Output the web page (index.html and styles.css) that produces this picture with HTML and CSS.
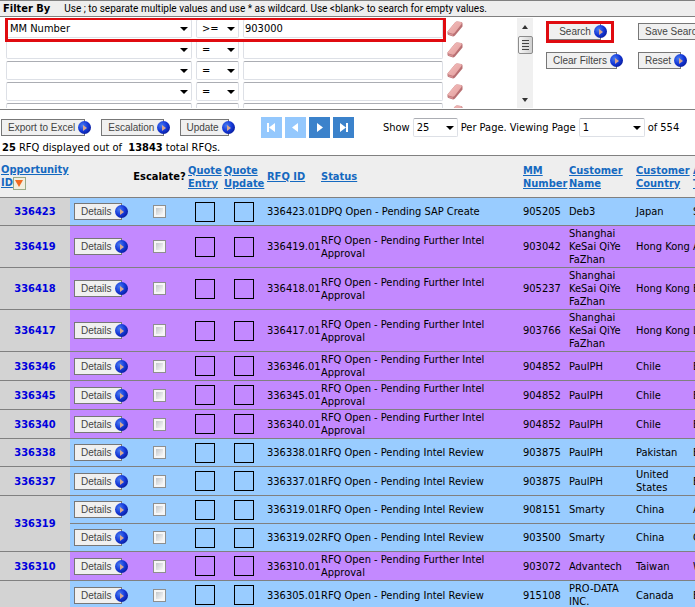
FILE: index.html
```html
<!DOCTYPE html>
<html lang="en">
<head>
<meta charset="utf-8">
<title>RFQ List</title>
<link rel="stylesheet" href="styles.css">
</head>
<body>
<svg class="defs" aria-hidden="true">
  <defs>
    <linearGradient id="pink" x1="0" y1="0" x2="1" y2="1">
      <stop offset="0" stop-color="#f3bfbd"/><stop offset="1" stop-color="#e39d9c"/>
    </linearGradient>
    <symbol id="eraser" viewBox="0 0 16 16">
      <path d="M0.500 10.500 L8 1.500 Q9 0.500 10 0.500 L14 1 Q15.500 1 15.500 2.500 L15.500 5.500 L8 14.500 Q7 15.500 6 15.500 L1.500 14 Q0.500 13.500 0.500 12.500 Z" fill="#b97073"/>
      <path d="M0.500 10.500 L8 1.500 Q9 0.500 10 0.500 L14 1 Q15.500 1.500 14.500 3 L7.500 12 Q6.500 13 5.500 12.700 L1.500 11.500 Q0.500 11.200 0.500 10.500 Z" fill="url(#pink)"/>
      <path d="M1 12 L6 13.500 L6 15 L2 13.800 Z" fill="#d69092"/>
    </symbol>
  </defs>
</svg>

<header class="filter-head">
  <h1>Filter By</h1>
  <p>Use ; to separate multiple values and use * as wildcard. Use &lt;blank&gt; to search for empty values.</p>
</header>

<form class="filters">
  <div class="filter-list">
    <div class="filter-row marked">
      <span class="select field"><select aria-label="Field 1"><option>MM Number</option></select></span>
      <span class="select op"><select aria-label="Operator 1"><option>&gt;=</option></select></span>
      <input class="value" type="text" aria-label="Value 1" value="903000">
      <button class="erase" type="button" aria-label="Clear row 1"><svg><use href="#eraser"/></svg></button>
    </div>
    <div class="filter-row">
      <span class="select field"><select aria-label="Field 2"><option></option></select></span>
      <span class="select op"><select aria-label="Operator 2"><option>=</option></select></span>
      <input class="value" type="text" aria-label="Value 2">
      <button class="erase" type="button" aria-label="Clear row 2"><svg><use href="#eraser"/></svg></button>
    </div>
    <div class="filter-row">
      <span class="select field"><select aria-label="Field 3"><option></option></select></span>
      <span class="select op"><select aria-label="Operator 3"><option>=</option></select></span>
      <input class="value" type="text" aria-label="Value 3">
      <button class="erase" type="button" aria-label="Clear row 3"><svg><use href="#eraser"/></svg></button>
    </div>
    <div class="filter-row">
      <span class="select field"><select aria-label="Field 4"><option></option></select></span>
      <span class="select op"><select aria-label="Operator 4"><option>=</option></select></span>
      <input class="value" type="text" aria-label="Value 4">
      <button class="erase" type="button" aria-label="Clear row 4"><svg><use href="#eraser"/></svg></button>
    </div>
    <div class="filter-row">
      <span class="select field"><select aria-label="Field 5"><option></option></select></span>
      <span class="select op"><select aria-label="Operator 5"><option></option></select></span>
      <input class="value" type="text" aria-label="Value 5">
      <button class="erase" type="button" aria-label="Clear row 5"><svg><use href="#eraser"/></svg></button>
    </div>
  </div>
  <div class="scrollbar" aria-hidden="true">
    <i class="up"></i><i class="thumb"></i><i class="down"></i>
  </div>
  <div class="actions">
    <span class="marked-button"><button class="btn search" type="button">Search</button></span>
    <button class="btn" type="button">Save Search</button>
    <button class="btn" type="button">Clear Filters</button>
    <button class="btn" type="button">Reset</button>
  </div>
</form>

<section class="toolbar">
  <div class="tools">
    <div class="commands">
      <button class="btn" type="button">Export to Excel</button>
      <button class="btn" type="button">Escalation</button>
      <button class="btn short" type="button">Update</button>
    </div>
    <nav class="pager" aria-label="Pages">
      <button type="button" disabled aria-label="First"><svg viewBox="0 0 21 21"><path d="M6 6h2v9H6zM14 6v9L8 10.500z"/></svg></button>
      <button type="button" disabled aria-label="Previous"><svg viewBox="0 0 21 21"><path d="M13 6v9L7 10.500z"/></svg></button>
      <button type="button" aria-label="Next"><svg viewBox="0 0 21 21"><path d="M8 6v9L14 10.500z"/></svg></button>
      <button type="button" aria-label="Last"><svg viewBox="0 0 21 21"><path d="M13 6h2v9H13zM7 6v9L13 10.500z"/></svg></button>
    </nav>
    <div class="paging">
      <label for="size">Show</label>
      <span class="select size"><select id="size"><option>25</option></select></span>
      <label for="page">Per Page. Viewing Page</label>
      <span class="select page"><select id="page"><option>1</option></select></span>
      <span>of 554</span>
    </div>
  </div>
  <p class="count"><b>25</b> RFQ displayed out of &nbsp;<b>13843</b> total RFQs.</p>
</section>

<main class="results">
<table>
  <colgroup>
    <col class="c-opp"><col class="c-det"><col class="c-esc"><col class="c-entry"><col class="c-upd"><col class="c-rfq"><col class="c-status"><col class="c-mm"><col class="c-name"><col class="c-country"><col>
  </colgroup>
  <thead>
    <tr>
      <th><a href="#">Opportunity<br>ID</a><span class="sort"></span></th>
      <th></th>
      <th class="mid">Escalate?</th>
      <th><a href="#">Quote<br>Entry</a></th>
      <th><a href="#">Quote<br>Update</a></th>
      <th class="rfq"><a href="#">RFQ ID</a></th>
      <th><a href="#">Status</a></th>
      <th><a href="#">MM<br>Number</a></th>
      <th><a href="#">Customer<br>Name</a></th>
      <th><a href="#">Customer<br>Country</a></th>
      <th><a href="#">A<br>T</a></th>
    </tr>
  </thead>
  <tbody>
    <tr class="blue"><th scope="row"><a href="#">336423</a></th><td class="det"><button class="btn" type="button">Details</button></td><td class="mid"><input type="checkbox" aria-label="Escalate 336423.01"></td><td class="mid"><i class="box"></i></td><td class="mid"><i class="box"></i></td><td class="rfq">336423.01</td><td>DPQ Open - Pending SAP Create</td><td>905205</td><td>Deb3</td><td>Japan</td><td>S</td></tr>
    <tr><th scope="row"><a href="#">336419</a></th><td class="det"><button class="btn" type="button">Details</button></td><td class="mid"><input type="checkbox" aria-label="Escalate 336419.01"></td><td class="mid"><i class="box"></i></td><td class="mid"><i class="box"></i></td><td class="rfq">336419.01</td><td>RFQ Open - Pending Further Intel Approval</td><td>903042</td><td>Shanghai KeSai QiYe FaZhan</td><td>Hong Kong</td><td>A</td></tr>
    <tr><th scope="row"><a href="#">336418</a></th><td class="det"><button class="btn" type="button">Details</button></td><td class="mid"><input type="checkbox" aria-label="Escalate 336418.01"></td><td class="mid"><i class="box"></i></td><td class="mid"><i class="box"></i></td><td class="rfq">336418.01</td><td>RFQ Open - Pending Further Intel Approval</td><td>905237</td><td>Shanghai KeSai QiYe FaZhan</td><td>Hong Kong</td><td>E</td></tr>
    <tr><th scope="row"><a href="#">336417</a></th><td class="det"><button class="btn" type="button">Details</button></td><td class="mid"><input type="checkbox" aria-label="Escalate 336417.01"></td><td class="mid"><i class="box"></i></td><td class="mid"><i class="box"></i></td><td class="rfq">336417.01</td><td>RFQ Open - Pending Further Intel Approval</td><td>903766</td><td>Shanghai KeSai QiYe FaZhan</td><td>Hong Kong</td><td>L</td></tr>
    <tr><th scope="row"><a href="#">336346</a></th><td class="det"><button class="btn" type="button">Details</button></td><td class="mid"><input type="checkbox" aria-label="Escalate 336346.01"></td><td class="mid"><i class="box"></i></td><td class="mid"><i class="box"></i></td><td class="rfq">336346.01</td><td>RFQ Open - Pending Further Intel Approval</td><td>904852</td><td>PaulPH</td><td>Chile</td><td>E</td></tr>
    <tr><th scope="row"><a href="#">336345</a></th><td class="det"><button class="btn" type="button">Details</button></td><td class="mid"><input type="checkbox" aria-label="Escalate 336345.01"></td><td class="mid"><i class="box"></i></td><td class="mid"><i class="box"></i></td><td class="rfq">336345.01</td><td>RFQ Open - Pending Further Intel Approval</td><td>904852</td><td>PaulPH</td><td>Chile</td><td>E</td></tr>
    <tr><th scope="row"><a href="#">336340</a></th><td class="det"><button class="btn" type="button">Details</button></td><td class="mid"><input type="checkbox" aria-label="Escalate 336340.01"></td><td class="mid"><i class="box"></i></td><td class="mid"><i class="box"></i></td><td class="rfq">336340.01</td><td>RFQ Open - Pending Further Intel Approval</td><td>904852</td><td>PaulPH</td><td>Chile</td><td>E</td></tr>
    <tr class="blue"><th scope="row"><a href="#">336338</a></th><td class="det"><button class="btn" type="button">Details</button></td><td class="mid"><input type="checkbox" aria-label="Escalate 336338.01"></td><td class="mid"><i class="box"></i></td><td class="mid"><i class="box"></i></td><td class="rfq">336338.01</td><td>RFQ Open - Pending Intel Review</td><td>903875</td><td>PaulPH</td><td>Pakistan</td><td>E</td></tr>
    <tr class="blue"><th scope="row"><a href="#">336337</a></th><td class="det"><button class="btn" type="button">Details</button></td><td class="mid"><input type="checkbox" aria-label="Escalate 336337.01"></td><td class="mid"><i class="box"></i></td><td class="mid"><i class="box"></i></td><td class="rfq">336337.01</td><td>RFQ Open - Pending Intel Review</td><td>903875</td><td>PaulPH</td><td>United States</td><td>E</td></tr>
    <tr class="blue"><th scope="rowgroup" rowspan="2"><a href="#">336319</a></th><td class="det"><button class="btn" type="button">Details</button></td><td class="mid"><input type="checkbox" aria-label="Escalate 336319.01"></td><td class="mid"><i class="box"></i></td><td class="mid"><i class="box"></i></td><td class="rfq">336319.01</td><td>RFQ Open - Pending Intel Review</td><td>908151</td><td>Smarty</td><td>China</td><td>A</td></tr>
    <tr class="blue"><td class="det"><button class="btn" type="button">Details</button></td><td class="mid"><input type="checkbox" aria-label="Escalate 336319.02"></td><td class="mid"><i class="box"></i></td><td class="mid"><i class="box"></i></td><td class="rfq">336319.02</td><td>RFQ Open - Pending Intel Review</td><td>903500</td><td>Smarty</td><td>China</td><td>C</td></tr>
    <tr><th scope="row"><a href="#">336310</a></th><td class="det"><button class="btn" type="button">Details</button></td><td class="mid"><input type="checkbox" aria-label="Escalate 336310.01"></td><td class="mid"><i class="box"></i></td><td class="mid"><i class="box"></i></td><td class="rfq">336310.01</td><td>RFQ Open - Pending Further Intel Approval</td><td>903072</td><td>Advantech</td><td>Taiwan</td><td>W</td></tr>
    <tr class="blue"><th scope="row"></th><td class="det"><button class="btn" type="button">Details</button></td><td class="mid"><input type="checkbox" aria-label="Escalate 336305.01"></td><td class="mid"><i class="box"></i></td><td class="mid"><i class="box"></i></td><td class="rfq">336305.01</td><td>RFQ Open - Pending Intel Review</td><td>915108</td><td>PRO-DATA INC.</td><td>Canada</td><td>E</td></tr>
  </tbody>
</table>
</main>
</body>
</html>
```
FILE: styles.css
```css
*, *::before, *::after { box-sizing: border-box; }

html { scrollbar-width: none; overflow-x: hidden; }

body {
  margin: 0;
  background: #fff;
  color: #000;
  font: 11px/13px "DejaVu Sans Condensed", "DejaVu Sans", sans-serif;
  overflow-x: hidden;
}

h1, p { margin: 0; }

input, select { font: inherit; color: inherit; }

.defs { position: absolute; width: 0; height: 0; }

/* Filter header */
.filter-head {
  display: flex;
  align-items: center;
  gap: 14px;
  height: 17px;
  padding-left: 3px;
  background: #eee;
  border-top: 1px solid #808080;
  border-bottom: 1px solid #808080;
  white-space: nowrap;
}

.filter-head h1 { font-size: 11px; line-height: 15px; }
.filter-head p { font: 10px/15px Roboto, sans-serif; }

/* Filter panel */
.filters {
  display: flex;
  height: 93px;
  overflow: hidden;
  padding: 1px 0;
  border-bottom: 1px solid #808080;
}

.filter-list { flex: none; width: 517px; height: 90px; overflow: hidden; }

.filter-row {
  position: relative;
  display: flex;
  align-items: center;
  gap: 4px;
  height: 21px;
  padding-left: 6px;
}

.filter-row.marked { z-index: 1; }

.filter-row.marked::after {
  content: "";
  position: absolute;
  top: -1px;
  left: 5px;
  width: 441px;
  height: 25px;
  border: 3px solid #e00b10;
  pointer-events: none;
}

.select { position: relative; display: flex; height: 19px; }

.select select, .value {
  width: 100%;
  height: 19px;
  padding: 0 3px;
  appearance: none;
  background: #fff;
  border: 1px solid #dde0e6;
  border-top-color: #abadb3;
  border-radius: 2px;
}

.select::after {
  content: "";
  position: absolute;
  top: 8px;
  right: 4px;
  border: 4px solid transparent;
  border-top-color: #000;
  border-bottom: 0;
  pointer-events: none;
}

.select.field { width: 186px; }
.select.op { width: 43px; }
.select.op select { padding-left: 5px; }
.select.size { width: 45px; }
.select.page { width: 66px; }
.value { width: 200px; padding: 0 1px; }

.erase { width: 16px; height: 16px; padding: 0; background: none; border: 0; }
.erase svg { display: block; width: 16px; height: 16px; }

.scrollbar {
  flex: none;
  display: flex;
  flex-direction: column;
  align-items: center;
  width: 16px;
  background: #f0f0f0;
}

.up, .down { border: 3px solid transparent; }
.up { margin-top: 7px; border-bottom: 4px solid #333; border-top: 0; }
.down { margin: auto 0 6px; border-top: 4px solid #333; border-bottom: 0; }

.thumb {
  width: 15px;
  height: 18px;
  margin-top: 7px;
  border: 1px solid #8c8c8c;
  border-radius: 2px;
  background:
    repeating-linear-gradient(#444 0 1px, #ddd 1px 3px) center / 7px 10px no-repeat,
    linear-gradient(90deg, #f6f6f6, #d0d0d0);
}

.actions {
  flex: none;
  display: grid;
  grid-template-columns: 92px auto;
  grid-auto-rows: 17px;
  row-gap: 12px;
  justify-items: start;
  padding: 5px 0 0 13px;
}

.marked-button {
  width: 68px;
  height: 22px;
  margin-top: -2px;
  border: 3px solid #e00b10;
}

/* Push button with a round arrow badge on its right edge */
.btn {
  position: relative;
  height: 17px;
  padding: 0 9px 0 6px;
  background: #f0f0f0;
  border: 1px solid #777;
  color: #444;
  font: 10px/13px "Liberation Sans", Arial, sans-serif;
  white-space: nowrap;
}

.btn.search { display: block; width: 52px; height: 16px; padding: 0 8px 0 9px; border-left: 0; border-top: 0; }
.btn.short { padding-left: 5px; }

.btn::after {
  content: "";
  position: absolute;
  top: 1px;
  right: -7px;
  width: 13px;
  height: 13px;
  border-radius: 50%;
  background: radial-gradient(circle at 35% 35%, #4a7cf0 0, #1438d8 45%, #0a1ea0 75%, #3353c8 100%);
}

.btn::before {
  content: "";
  position: absolute;
  z-index: 1;
  top: 5px;
  right: -3px;
  border: 3px solid transparent;
  border-left: 4px solid #d8a890;
  border-right: 0;
}

/* Toolbar */
.toolbar { padding-top: 7px; white-space: nowrap; }

.tools { display: flex; align-items: center; height: 21px; }

.commands { display: flex; gap: 16px; width: 261px; padding-left: 1px; flex: none; }

.pager { display: flex; gap: 3px; width: 122px; flex: none; }
.pager button { width: 21px; height: 21px; padding: 0; border: 0; background: #3b82cb; }
.pager button:disabled { background: #94c8fd; }
.pager svg { display: block; fill: #fff; }

.paging { display: flex; align-items: center; gap: 3px; }

.count { padding: 2px 0 0 2px; line-height: 15px; }

/* Results */
.results { overflow: hidden; border-top: 1px solid #808080; }

table {
  width: 100%;
  min-width: 760px;
  table-layout: fixed;
  border-collapse: separate;
  border-spacing: 0;
}

.c-opp { width: 70px; }
.c-det { width: 62px; }
.c-esc { width: 55px; }
.c-entry { width: 36px; }
.c-upd { width: 42px; }
.c-rfq { width: 55px; }
.c-status { width: 202px; }
.c-mm { width: 46px; }
.c-name { width: 67px; }
.c-country { width: 57px; }

th, td {
  height: 28px;
  padding: 1px 0 1px 1px;
  border-bottom: 1px solid #808080;
  text-align: left;
  vertical-align: middle;
}

thead th { height: 42px; background: #eee; white-space: nowrap; }
thead a { color: #1569c0; }

tbody th { padding-left: 0; background: #d3d3d3; text-align: center; }
tbody th a { color: #00d; text-decoration: none; }
tbody td { background: #c389ff; }
tbody .blue td { background: #99ccff; }

th.mid, td.mid { padding: 0; text-align: center; }
th.rfq, td.rfq { padding-left: 2px; }
td.det { padding-left: 4px; }
td .btn, td input { display: block; }

.sort {
  display: inline-block;
  width: 13px;
  height: 13px;
  border: 1px solid #9aaa88;
  background: #f2efdf;
  vertical-align: middle;
}

.sort::before {
  content: "";
  display: block;
  margin: 2px auto 0;
  width: 0;
  border: 4px solid transparent;
  border-top: 7px solid #f26a21;
  border-bottom: 0;
}

td input {
  appearance: none;
  width: 13px;
  height: 13px;
  margin: 0 auto;
  border: 1px solid #8e8f8f;
  background: linear-gradient(135deg, #c4c8cc, #f8f8f8) content-box, #f6f6f6;
  padding: 2px;
}

.box { display: block; width: 20px; height: 20px; margin: 0 auto; border: 1px solid #000; }
```
